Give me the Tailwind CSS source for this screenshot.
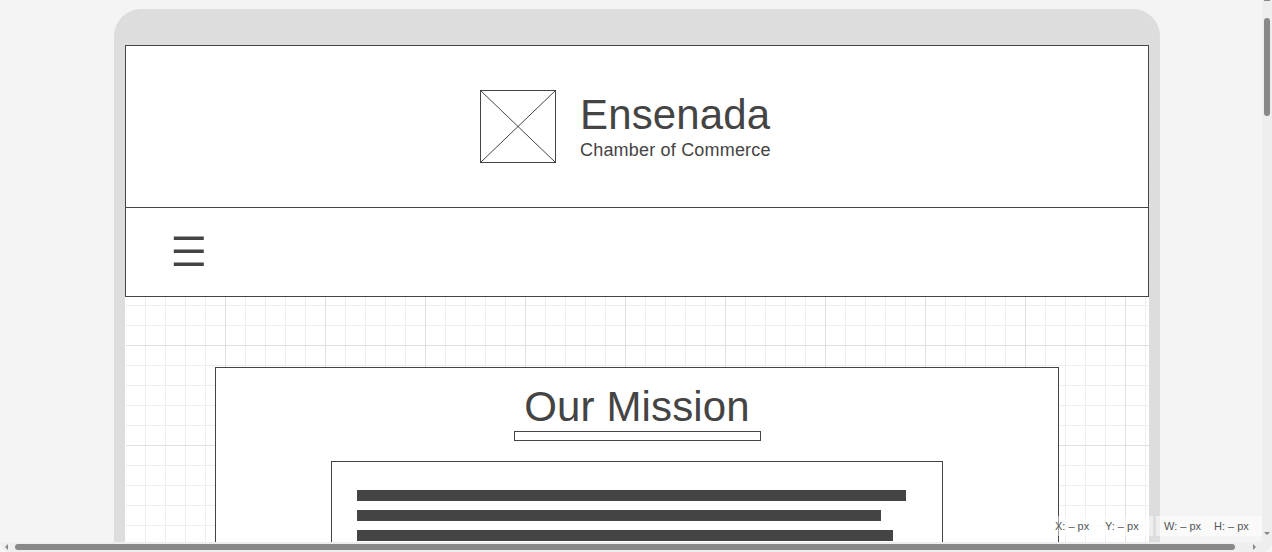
<!DOCTYPE html>
<html lang="en">
<head>
<meta charset="utf-8">
<title>Ensenada Chamber of Commerce</title>
<script src="https://cdn.jsdelivr.net/npm/@tailwindcss/browser@4"></script>
</head>
<body class="grid h-[552px] w-[1272px] grid-cols-[1262px_10px] grid-rows-[542px_10px] overflow-hidden bg-[#eeeeee] font-['Liberation_Sans',Arial,sans-serif] text-[#444444]">
<main class="relative h-[542px] overflow-hidden bg-[#f4f4f4] pt-[9px] pl-[114px]">
  <div class="h-[600px] w-[1046px] rounded-t-[27px] bg-[#dddddd] px-[11px] pt-9">
    <div class="relative h-full w-[1024px] bg-white">
      <svg class="absolute top-0 left-px" width="1024" height="560" shape-rendering="crispEdges">
        <defs>
          <pattern id="minor" x="-1" y="0" width="20" height="20" patternUnits="userSpaceOnUse"><path d="M0 0h20v1H0zM0 0h1v20H0z" fill="#eeeeee"/></pattern>
          <pattern id="major" x="-1" y="0" width="100" height="100" patternUnits="userSpaceOnUse"><path d="M0 0h100v1H0zM0 0h1v100H0z" fill="#e0e0e0"/></pattern>
        </defs>
        <rect width="1024" height="560" fill="url(#minor)"/>
        <rect width="1024" height="560" fill="url(#major)"/>
      </svg>
      <div class="relative">
        <header class="h-[252px] border border-[#444444] bg-white">
          <div class="flex h-[162px] items-start border-b border-[#444444] pt-11 pl-[354px]">
            <svg width="76" height="73" viewBox="0 0 76 73" fill="none" stroke="#444444"><rect x=".5" y=".5" width="75" height="72"/><path d="M.5 .5l75 72M75.5 .5l-75 72"/></svg>
            <div class="ml-6 whitespace-nowrap">
              <h1 class="h-[50px] text-[42px] leading-[50px] tracking-[0.14px]">Ensenada</h1>
              <p class="text-[18px] leading-[20px] tracking-[0.19px]">Chamber of Commerce</p>
            </div>
          </div>
          <nav class="pt-7 pl-[47px]">
            <svg width="34" height="32" viewBox="173 236 34 32" fill="#444444"><path d="M173.8 236.6h30v3.5h-30zM173.8 249.6h30v3.4h-30zM173.8 262.5h30v3.5h-30z"/></svg>
          </nav>
        </header>
        <section class="mt-[70px] ml-[90px] flex h-[260px] w-[844px] flex-col items-center border border-[#444444] bg-white pt-[14px]">
          <h2 class="h-[49px] text-[42px] leading-[50px] tracking-[0.14px]">Our Mission</h2>
          <div class="ml-px h-[10px] w-[247px] shrink-0 border border-[#444444]"></div>
          <div class="mt-5 flex h-[170px] w-[612px] shrink-0 flex-col gap-[9px] border border-[#444444] pt-7 pl-[25px]">
            <div class="h-[11px] w-[549px] bg-[#444444]"></div>
            <div class="h-[11px] w-[524px] bg-[#444444]"></div>
            <div class="h-[11px] w-[536px] bg-[#444444]"></div>
          </div>
        </section>
      </div>
    </div>
  </div>
  <div class="absolute top-[516px] left-[1055px] flex h-5 gap-[3px] text-[11px] leading-5 whitespace-nowrap text-[#555555]">
    <div class="flex w-[98px] bg-white/50"><span class="w-[50px]">X: – px</span><span>Y: – px</span></div>
    <div class="flex w-[106px] bg-white/50 pl-2"><span class="w-[50px]">W: – px</span><span>H: – px</span></div>
  </div>
</main>
<aside class="relative flex flex-col items-center pt-[18px]">
  <div class="h-[98px] w-[6px] rounded-full bg-[#888888]"></div>
  <svg class="absolute top-0 left-0" width="10" height="542" fill="#888888"><path d="M2 0h6v1H2zM2 532h6l-3 3z"/></svg>
</aside>
<footer class="relative col-span-2 h-[10px] pt-[2px] pl-[15px]">
  <div class="h-[6px] w-[1220px] rounded-full bg-[#888888]"></div>
  <svg class="absolute top-0 left-0" width="1272" height="10"><path d="M0 0Q1 8 9 10H0zM1272 0Q1271 8 1263 10h9z" fill="#f6f6f6"/><path d="M8 2v6L5 5zM1253 2v6l3-3z" fill="#888888"/></svg>
</footer>
</body>
</html>
